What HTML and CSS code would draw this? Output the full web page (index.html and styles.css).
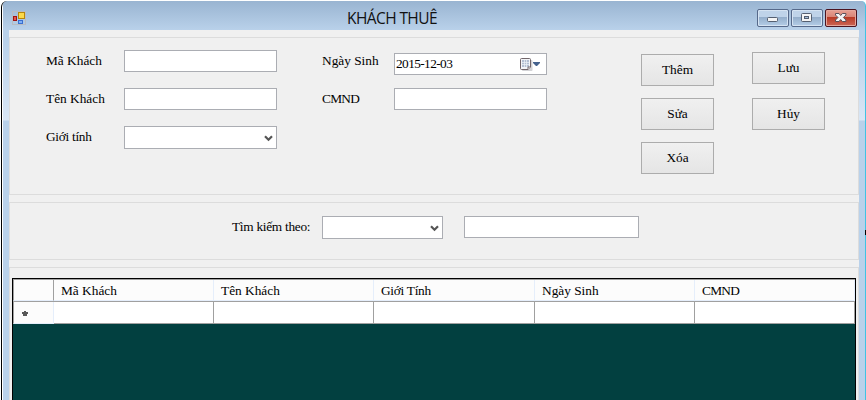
FILE: index.html
```
<!DOCTYPE html>
<html lang="vi">
<head>
<meta charset="utf-8">
<title>KHÁCH THUÊ</title>
<link rel="stylesheet" href="styles.css">
</head>
<body>
<div class="desktop">
  <div class="window">
    <header class="titlebar">
      <svg class="app-icon" width="14" height="14" viewBox="0 0 14 14">
        <rect x=".5" y=".5" width="13" height="13" fill="none" stroke="#b9bcc2"/>
        <rect x="6.5" y="1.5" width="6" height="6" fill="#fbd94a" stroke="#b8860b"/>
        <rect x="1.5" y="5.5" width="3" height="4" fill="#e2574c" stroke="#a01414"/>
        <rect x="6.5" y="9.5" width="4" height="3" fill="#7fb0f5" stroke="#3a6fd0"/>
      </svg>
      <h1 class="title">KHÁCH THUÊ</h1>
      <div class="controls">
        <span class="control"><svg width="28" height="14" viewBox="0 0 28 14"><rect x="8.5" y="6.5" width="10" height="4" rx="1" fill="#f5f5f5" stroke="#555f70"/></svg></span>
        <span class="control"><svg width="28" height="14" viewBox="0 0 28 14"><rect x="8.5" y="2.5" width="10" height="8" rx="1" fill="#f5f5f5" stroke="#555f70"/><rect x="11.5" y="5.500" width="4" height="2" fill="#a4bcd8" stroke="#555f70"/></svg></span>
        <span class="control close"><svg width="28" height="14" viewBox="0 0 28 14"><path d="M8.500 2.500h3.500l1.700 2 1.700-2h3.500v1.500l-2.500 2.500 2.500 2.500v1.500h-3.500l-1.700-2-1.700 2H8.500V9L11 6.500 8.500 4z" fill="#f5f5f5" stroke="#59505a"/></svg></span>
      </div>
    </header>
    <main class="client">
      <section class="group details">
        <div class="fields">
          <label>Mã Khách</label><span class="input"></span>
          <label>Tên Khách</label><span class="input"></span>
          <label class="tight">Giới tính</label>
          <span class="input combo"><svg width="9" height="7" viewBox="0 0 9 7"><path d="M1 1.200l3.500 3.500L8 1.200" fill="none" stroke="#555" stroke-width="2.200"/></svg></span>
        </div>
        <div class="fields second">
          <label>Ngày Sinh</label>
          <span class="input date"><span>2015-12-03</span>
            <svg width="22" height="13" viewBox="0 0 22 13">
              <rect x="2" y="2" width="10.500" height="11" rx="1" fill="#d3d3d6"/>
              <path d="M.5 1.500q0-1 1-1h8q1 0 1 1v7.500l-2.500 2.500h-6.500q-1 0-1-1z" fill="#f4f5f8" stroke="#72666a"/>
              <path d="M2 2h7v7H2z" fill="#b4bfd2"/>
              <path d="M2 4.500h7M2 6.500h7M4.500 2v7M6.500 2v7" stroke="#eef2f8" stroke-width=".7"/>
              <path d="M8 11.500V9h2.500" fill="#fff" stroke="#72666a"/>
              <path d="M13 4h7v1l-3 3h-1l-3-3z" fill="#45628d"/>
            </svg>
          </span>
          <label class="tighter">CMND</label><span class="input"></span>
        </div>
        <div class="buttons"><button>Thêm</button><button>Sửa</button><button>Xóa</button></div>
        <div class="buttons end"><button>Lưu</button><button>Hủy</button></div>
      </section>
      <section class="group search">
        <label class="tight">Tìm kiếm theo:</label>
        <span class="input combo"><svg width="9" height="7" viewBox="0 0 9 7"><path d="M1 1.200l3.500 3.500L8 1.200" fill="none" stroke="#555" stroke-width="2.200"/></svg></span>
        <span class="input query"></span>
      </section>
      <section class="group results">
        <div class="grid">
          <div class="row head"><span></span><span>Mã Khách</span><span>Tên Khách</span><span class="tight">Giới Tính</span><span>Ngày Sinh</span><span class="tighter">CMND</span></div>
          <div class="row blank"><span><svg width="6" height="6" viewBox="0 0 6 6"><path d="M2 0h2v1h2v2H5v2H1V3H0V1h2z" fill="#585858"/></svg></span><span></span><span></span><span></span><span></span><span></span></div>
        </div>
      </section>
    </main>
  </div>
  <i class="edge-mark"></i>
</div>
</body>
</html>
```

FILE: styles.css
```
* { box-sizing: border-box; }
body { margin: 0; background: #fff; color: #000; font: 13.330px/16px "Liberation Serif", serif; }
.desktop { position: relative; width: 866px; height: 400px; overflow: hidden; padding: 1px 0 0 1px; }
.window {
  height: 399px; padding: 0 6px 0 7px;
  border-left: 1px solid #000; border-right: 1px solid #3fc3e4; border-radius: 6px 5px 0 0;
  background:
    linear-gradient(#fff, #fff) 0 0 / 1px 100% no-repeat,
    linear-gradient(#99b4d1, #b9d1ea 29px, #b9d1ea 40px, #d9e6f5 119px, #b9d1ea 120px);
}
.titlebar { display: grid; grid-template-columns: 18px 1fr 102px; height: 29px; }
.app-icon { margin: 10px 0 0 3px; }
.title { margin: 7px 0 0; text-align: center; font: 15.500px/20px "Open Sans", "Noto Sans", sans-serif; letter-spacing: -.6px; color: #111; }
.controls { display: flex; gap: 2px; padding-top: 8px; }
.control {
  width: 32px; height: 18px; padding: 1px; border: 1px solid #56698a; border-radius: 2px;
  box-shadow: inset 0 0 0 1px #d5e3f2;
  background: linear-gradient(#bfd3e9 0 45%, #94aecb 46%, #b4cde7);
}
.control svg { display: block; }
.close { border-color: #4b1420; box-shadow: inset 0 0 0 1px #e5a69b; background: linear-gradient(#e7a093, #d88476 44%, #b93a25 46%, #cc6656); }
.client { height: 370px; padding-top: 7px; background: #f0f0f0; }
.group { border: 1px solid #dcdcdc; }
.details { display: flex; align-items: flex-start; height: 158px; padding: 12px 0 0 36px; }
.fields { display: grid; grid-template-columns: 78px 153px; grid-auto-rows: 23px; row-gap: 15px; width: 276px; }
.fields label { padding-top: 3px; }
.tight { letter-spacing: -.28px; }
.tighter { letter-spacing: -.7px; }
.second { grid-template-columns: 72px 153px; width: 319px; }
.input { display: block; height: 22px; background: #fff; border: 1px solid #abadb3; }
.combo { display: flex; justify-content: flex-end; align-items: center; height: 23px; padding: 2px 3px 0 0; }
.date { display: flex; align-items: center; justify-content: space-between; margin-top: 3px; padding: 0 4px 0 1px; letter-spacing: -.6px; }
.buttons { display: grid; grid-template-columns: 73px; grid-auto-rows: 32px; row-gap: 12px; padding-top: 4px; }
.end { margin-left: 38px; padding-top: 2px; row-gap: 14px; }
button { border: 1px solid #acacac; border-radius: 0; padding: 0; background: linear-gradient(#f0f0f0, #e5e5e5); color: #000; font: inherit; }
.search { display: flex; height: 58px; margin-top: 7px; padding: 13px 0 0 222px; }
.search label { width: 90px; padding-top: 3px; white-space: nowrap; }
.search .combo { width: 121px; }
.search .query { width: 175px; margin-left: 21px; }
.results { height: 133px; margin-top: 7px; border-bottom: 0; padding: 10px 2px 0; }
.grid { height: 122px; border: 1px solid #000; border-bottom: 0; background: #024040; }
.row { display: grid; grid-template-columns: 41px 160px 160px 161px 160px 160px; }
.row span { border-right: 1px solid #a0a0a0; }
.head { height: 23px; background: #fcfcfc; border-top: 1px solid #a0a0a0; border-bottom: 1px solid #a0a0a0; }
.head span { padding: 3px 0 0 7px; border-color: #e5eefb; border-bottom: 1px solid #e5eefb; }
.head span:first-child, .blank span:first-child { border-left: 1px solid #a0a0a0; }
.head span:first-child { border-right-color: #a0a0a0; }
.blank { height: 22px; background: #fff; }
.blank span { border-bottom: 1px solid #a0a0a0; }
.blank span:first-child { background: #fcfcfc; border-right-color: #e5eefb; border-bottom-color: #e5eefb; padding: 9px 0 0 8px; }
.blank svg { display: block; }
.edge-mark { position: absolute; right: 0; top: 230px; width: 1px; height: 5px; background: #000; }
```
